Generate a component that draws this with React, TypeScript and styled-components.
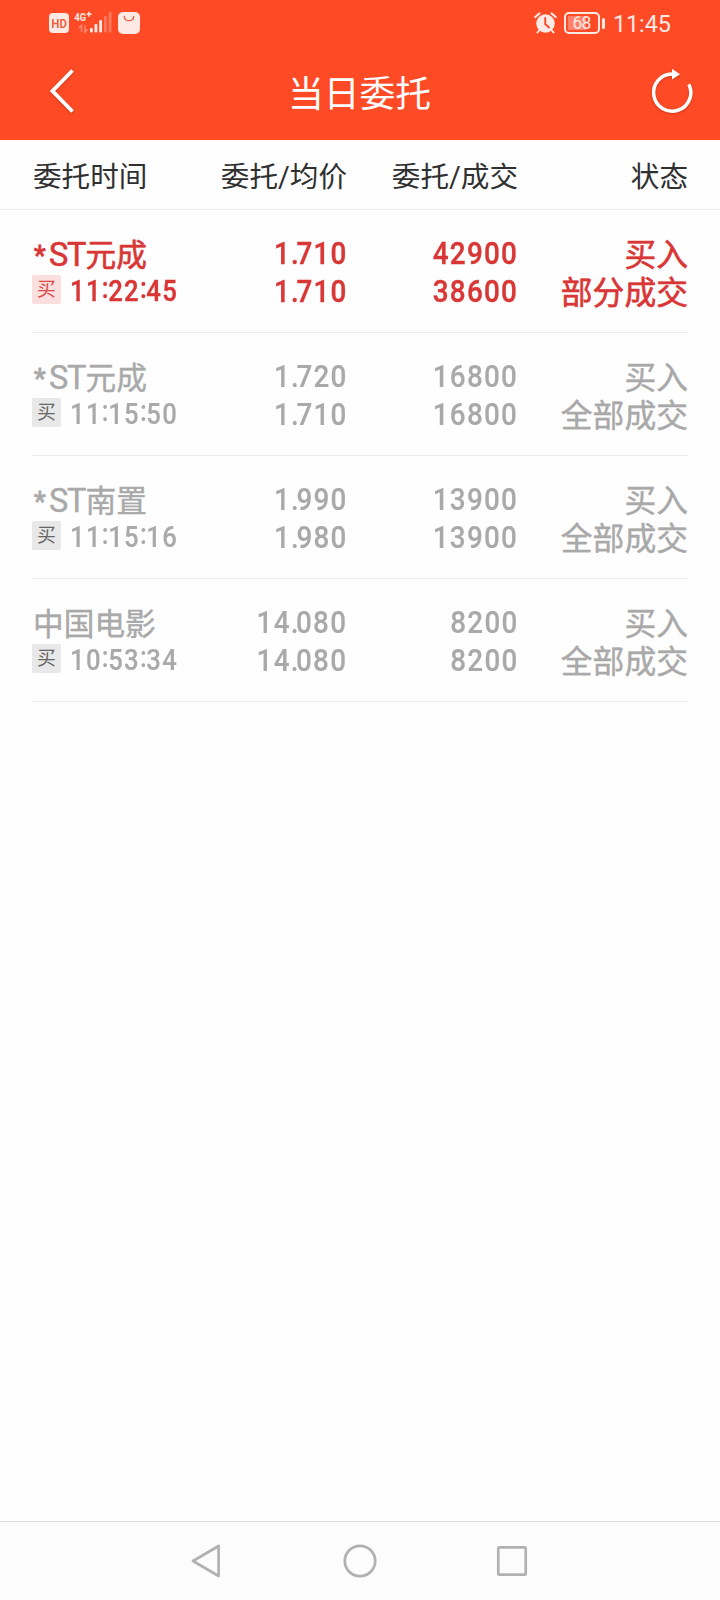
import React from "react";
import styled, { createGlobalStyle } from "styled-components";

const GlobalStyle = createGlobalStyle`
  * { box-sizing: border-box; }
  body {
    margin: 0;
    background: #fefefe;
    font-family: Roboto, "Noto Sans CJK SC", sans-serif;
  }
`;

const BRAND = "#ff4a26";
const PALE = "#ffe9e4";

const Screen = styled.div`
  display: flex;
  flex-direction: column;
  width: 720px;
  height: 1600px;
  background: #fefefe;
`;

const StatusBar = styled.div`
  display: flex;
  justify-content: space-between;
  align-items: flex-start;
  height: 46px;
  padding: 12px 49px 0 49px;
  background: ${BRAND};
  color: ${PALE};
`;

const StatusGroup = styled.div`
  display: flex;
  align-items: flex-start;
`;

const HdBadge = styled.div`
  width: 20px;
  height: 20px;
  margin: 1px 5px 0 0;
  border-radius: 4px;
  background: ${PALE};
  color: #f2603f;
  font-size: 13.5px;
  font-weight: 700;
  line-height: 21px;
  text-align: center;
  span {
    display: inline-block;
    margin: 0 -3px;
    transform: scaleX(0.85);
  }
`;

const SignalIcon = styled.svg`
  width: 38px;
  height: 22px;
  margin-right: 6px;
  overflow: visible;
`;

const BagIcon = styled.svg`
  width: 22px;
  height: 22px;
`;

const AlarmIcon = styled.svg`
  width: 24px;
  height: 22px;
  margin-right: 6px;
`;

const Battery = styled.div`
  display: flex;
  align-items: center;
  height: 22px;
  margin-right: 8px;
`;

const BatteryCell = styled.div<{ $level: number }>`
  width: 36px;
  height: 22px;
  border: 2px solid ${PALE};
  border-radius: 5px;
  padding: 2px 3px 2px 2px;
  font-size: 17.5px;
  line-height: 14px;
  text-align: center;
  letter-spacing: -0.9px;
  background: linear-gradient(
      to right,
      #ff826a ${(p) => p.$level}%,
      transparent ${(p) => p.$level}%
    )
    content-box;
`;

const BatteryCap = styled.div`
  width: 3px;
  height: 11px;
  margin-left: 2px;
  border-radius: 1.5px;
  background: ${PALE};
`;

const Clock = styled.div`
  width: 58px;
  font-size: 23.4px;
  line-height: 24px;
  letter-spacing: -0.1px;
  white-space: nowrap;
`;

const TitleBar = styled.header`
  display: grid;
  grid-template-columns: 48px 1fr 48px;
  align-items: center;
  height: 94px;
  padding: 0 24px 4px 38px;
  background: ${BRAND};
  color: #fff;
`;

const Title = styled.h1`
  margin: 0;
  padding: 8px 15px 0 0;
  font-size: 35.8px;
  font-weight: 400;
  line-height: 50px;
  text-align: center;
`;

const IconButton = styled.button`
  display: flex;
  align-items: center;
  justify-content: center;
  width: 48px;
  height: 48px;
  padding: 0;
  border: 0;
  background: none;
  svg {
    filter: drop-shadow(0 1px 1px rgba(120, 30, 10, 0.4));
  }
`;

const COLUMNS = "155px 160px 171px 170px";

const ColumnHeads = styled.div`
  display: grid;
  grid-template-columns: ${COLUMNS};
  align-items: center;
  height: 70px;
  padding: 4px 32px 0;
  border-bottom: 1px solid #ebebeb;
  color: #303030;
  font-size: 28.6px;
  line-height: 40px;
  white-space: nowrap;
`;

const ColumnHead = styled.div<{ $right?: boolean }>`
  display: flex;
  justify-content: ${(p) => (p.$right ? "flex-end" : "flex-start")};
  padding-left: ${(p) => (p.$right ? "0" : "1px")};
`;

const List = styled.main`
  flex: 1;
  padding: 0 32px;
`;

const Row = styled.div<{ $active: boolean }>`
  display: grid;
  grid-template-columns: ${COLUMNS};
  height: 123px;
  padding-top: 24px;
  border-bottom: 1px solid #ebebeb;
  color: ${(p) => (p.$active ? "#d93636" : "#a9a9a9")};
  white-space: nowrap;
  --figure-stroke: ${(p) => (p.$active ? "0.4px" : "0.15px")};
  -webkit-text-stroke: ${(p) => (p.$active ? "0.6px" : "0.4px")} currentColor;
`;

const Cell = styled.div`
  display: flex;
  flex-direction: column;
  align-items: flex-end;
`;

const NameCell = styled(Cell)`
  align-items: flex-start;
`;

const Figure = styled.div`
  height: 38px;
  margin-right: -0.5px;
  font-size: 32px;
  font-weight: 500;
  line-height: 38px;
  letter-spacing: 1.45px;
  transform: scaleX(0.87);
  transform-origin: right;
  -webkit-text-stroke-width: var(--figure-stroke);
`;

const Point = styled.span`
  letter-spacing: -2.8px;
`;

const Status = styled.div`
  height: 38px;
  font-size: 31.8px;
  line-height: 43px;
`;

const Name = styled.div`
  display: flex;
  height: 38px;
  padding-left: 1px;
  font-size: 30.7px;
  line-height: 43px;
`;

const Prefix = styled.span`
  display: flex;
  width: 52.5px;
  padding-left: 1px;
  font-size: 32.5px;
  line-height: 42px;
  letter-spacing: -1.2px;
`;

const Star = styled.span`
  width: 15px;
  padding-top: 3px;
  font-size: 27px;
  line-height: 38px;
  -webkit-text-stroke-width: 0.9px;
`;

const TimeLine = styled.div`
  display: flex;
  align-items: center;
  gap: 9px;
  height: 36px;
`;

const SideTag = styled.span<{ $active: boolean }>`
  width: 29px;
  height: 29px;
  margin-bottom: 2px;
  border-radius: 2px;
  background: ${(p) => (p.$active ? "#fbdede" : "#e8e8e8")};
  color: ${(p) => (p.$active ? "#d94a4a" : "#666")};
  font-size: 18.8px;
  line-height: 31px;
  text-align: center;
  -webkit-text-stroke: 0;
`;

const Time = styled.span`
  display: flex;
  padding-top: 2px;
  font-size: 29.5px;
  font-weight: 500;
  line-height: 34px;
  letter-spacing: 1.5px;
  transform: scaleX(0.87);
  transform-origin: left;
  -webkit-text-stroke-width: var(--figure-stroke);
`;

const Colon = styled.span`
  width: 7.3px;
  letter-spacing: 0;
  line-height: 28px;
`;

const NavBar = styled.nav`
  display: flex;
  justify-content: center;
  gap: 112px;
  height: 79px;
  padding-top: 19px;
  border-top: 1px solid #dcdcdc;
  background: #fcfcfc;
`;

const NavIcon = styled.svg`
  width: 40px;
  height: 40px;
  fill: none;
  stroke: #b1b1b1;
  stroke-width: 2.7;
  stroke-linejoin: round;
`;

interface Order {
  special?: boolean;
  name: string;
  time: string;
  price: string;
  average: string;
  ordered: string;
  filled: string;
  status: string;
  active: boolean;
}

const orders: Order[] = [
  { special: true, name: "元成", time: "11:22:45", price: "1.710", average: "1.710", ordered: "42900", filled: "38600", status: "部分成交", active: true },
  { special: true, name: "元成", time: "11:15:50", price: "1.720", average: "1.710", ordered: "16800", filled: "16800", status: "全部成交", active: false },
  { special: true, name: "南置", time: "11:15:16", price: "1.990", average: "1.980", ordered: "13900", filled: "13900", status: "全部成交", active: false },
  { name: "中国电影", time: "10:53:34", price: "14.080", average: "14.080", ordered: "8200", filled: "8200", status: "全部成交", active: false },
];

function Price({ value }: { value: string }) {
  const [whole, fraction] = value.split(".");
  return (
    <Figure>
      {whole}
      <Point>.</Point>
      {fraction}
    </Figure>
  );
}

function OrderTime({ value }: { value: string }) {
  const [hours, minutes, seconds] = value.split(":");
  return (
    <Time>
      {hours}
      <Colon>:</Colon>
      {minutes}
      <Colon>:</Colon>
      {seconds}
    </Time>
  );
}

function OrderRow({ order }: { order: Order }) {
  return (
    <Row $active={order.active}>
      <NameCell>
        <Name>
          {order.special && (
            <Prefix>
              <Star>*</Star>ST
            </Prefix>
          )}
          <span>{order.name}</span>
        </Name>
        <TimeLine>
          <SideTag $active={order.active}>买</SideTag>
          <OrderTime value={order.time} />
        </TimeLine>
      </NameCell>
      <Cell>
        <Price value={order.price} />
        <Price value={order.average} />
      </Cell>
      <Cell>
        <Figure>{order.ordered}</Figure>
        <Figure>{order.filled}</Figure>
      </Cell>
      <Cell>
        <Status>买入</Status>
        <Status>{order.status}</Status>
      </Cell>
    </Row>
  );
}

export default function App() {
  return (
    <Screen lang="zh-CN">
      <GlobalStyle />
      <StatusBar>
        <StatusGroup>
          <HdBadge>
            <span>HD</span>
          </HdBadge>
          <SignalIcon viewBox="0 0 38 22" fill={PALE}>
            <text x="0.5" y="8.6" fontSize="11.5" fontWeight="700" textLength="11.5" lengthAdjust="spacingAndGlyphs">4G</text>
            <path d="M15 -0.2v5M12.6 2.3h5" stroke={PALE} strokeWidth="1.5" />
            <path d="M5 16l2.5-2.5V20M13.5 17.5 11 20v-6.5" fill="none" stroke={PALE} strokeWidth="1.6" opacity="0.4" />
            <rect x="16" y="16" width="2.8" height="4.5" rx="1" />
            <rect x="20.5" y="12" width="2.8" height="8.5" rx="1" />
            <rect x="25.2" y="8" width="2.8" height="12.5" rx="1" />
            <rect x="30" y="4" width="2.8" height="16.5" rx="1" opacity="0.3" />
            <rect x="34.7" y="0" width="2.8" height="20.5" rx="1" opacity="0.3" />
          </SignalIcon>
          <BagIcon viewBox="0 0 22 22">
            <rect width="22" height="22" rx="5" fill={PALE} />
            <path d="M6.3 4.5c.5 5.6 8.9 5.6 9.4 0" fill="none" stroke="#e8583c" strokeWidth="1.3" strokeLinecap="round" />
          </BagIcon>
        </StatusGroup>
        <StatusGroup>
          <AlarmIcon viewBox="0 0 24 22">
            <circle cx="11.5" cy="11.5" r="9.3" fill={PALE} />
            <path d="M1.3 5 5.3 1.5M17.7 1.5 21.7 5" stroke={PALE} strokeWidth="2.2" strokeLinecap="round" />
            <path d="M5.5 18 3.5 20.5M17.5 18 19.5 20.5" stroke={PALE} strokeWidth="2" strokeLinecap="round" />
            <path d="M11.2 6v6l3.8 3.5" fill="none" stroke={BRAND} strokeWidth="1.9" strokeLinecap="round" />
          </AlarmIcon>
          <Battery>
            <BatteryCell $level={68}>68</BatteryCell>
            <BatteryCap />
          </Battery>
          <Clock>11:45</Clock>
        </StatusGroup>
      </StatusBar>
      <TitleBar>
        <IconButton aria-label="返回">
          <svg width="48" height="48" viewBox="0 0 48 48" fill="none" stroke="#fff" strokeWidth="3.9">
            <path d="M34.5 3.5 14.5 24l20 20.5" />
          </svg>
        </IconButton>
        <Title>当日委托</Title>
        <IconButton aria-label="刷新">
          <svg width="48" height="48" viewBox="0 0 48 48" fill="none">
            <path d="M24 7A18.6 18.6 0 1 0 40.8 17.2" stroke="#fff" strokeWidth="3.5" />
            <path d="M24 1.8 32 7.3 24 12.5Z" fill="#fff" />
          </svg>
        </IconButton>
      </TitleBar>
      <ColumnHeads>
        <ColumnHead>委托时间</ColumnHead>
        <ColumnHead $right>委托/均价</ColumnHead>
        <ColumnHead $right>委托/成交</ColumnHead>
        <ColumnHead $right>状态</ColumnHead>
      </ColumnHeads>
      <List>
        {orders.map((order) => (
          <OrderRow key={order.time} order={order} />
        ))}
      </List>
      <NavBar>
        <NavIcon viewBox="0 0 40 40">
          <path d="M5 20 30.6 5v30Z" />
        </NavIcon>
        <NavIcon viewBox="0 0 40 40">
          <circle cx="20" cy="20" r="15.2" />
        </NavIcon>
        <NavIcon viewBox="0 0 40 40">
          <rect x="6.3" y="6.3" width="27.4" height="27.4" rx="1" />
        </NavIcon>
      </NavBar>
    </Screen>
  );
}
